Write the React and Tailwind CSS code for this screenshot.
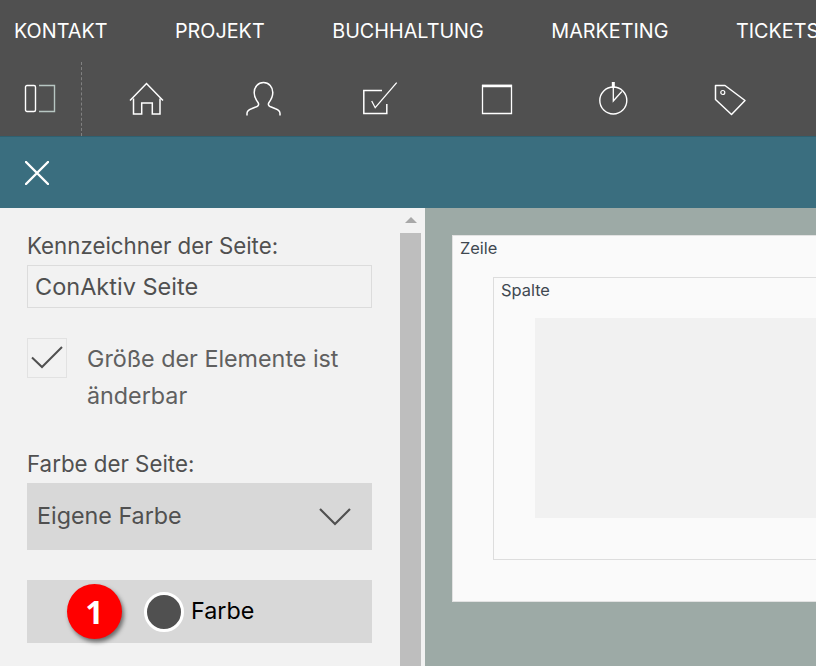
const NAV_ITEMS = ['KONTAKT', 'PROJEKT', 'BUCHHALTUNG', 'MARKETING', 'TICKETS']

const iconProps = {
  fill: 'none',
  stroke: 'currentColor',
  strokeWidth: 1.3,
  className: 'w-[36px] h-[36px] text-white',
  viewBox: '0 0 36 36',
}

function HomeIcon() {
  return (
    <svg {...iconProps}>
      <path d="M2 19.500 18.500 2.500 35 19.500" strokeWidth="1.500" />
      <path d="M5.500 17.500V33H13.700V22H24.300V33H32V17.500" strokeWidth="1.500" />
    </svg>
  )
}

function UserIcon() {
  return (
    <svg {...iconProps}>
      <path d="M2 34.500v-2c0-2.500 2-4 4.500-4.800l5.500-2.200c1.800-.8 2-2.500 1-4-2.200-3-3.800-6-3.800-10C9.200 6 13 1.500 18.500 1.500S27.800 6 27.800 11.500c0 4-1.600 7-3.800 10-1 1.500-.8 3.200 1 4l5.500 2.200c2.500.8 4.500 2.300 4.500 4.800v2" strokeWidth="1.500" />
    </svg>
  )
}

function TaskIcon() {
  return (
    <svg {...iconProps}>
      <path d="M20 9.500H1.800v23h23V23" strokeWidth="1.500" />
      <path d="M9.700 20l3.500 6.700L34.700 1.700" strokeWidth="1.300" />
    </svg>
  )
}

function WindowIcon() {
  return (
    <svg {...iconProps}>
      <path d="M3.500 4.500h29v28h-29z" strokeWidth="1.300" />
      <path d="M3 5h30" strokeWidth="2.500" />
    </svg>
  )
}

function TimerIcon() {
  return (
    <svg {...iconProps}>
      <circle cx="17.300" cy="19.500" r="13.500" strokeWidth="1.400" />
      <path d="M17.300 1v6" strokeWidth="3" />
      <path d="M17.300 6v14l8.500-9.500" strokeWidth="1.300" />
    </svg>
  )
}

function TagIcon() {
  return (
    <svg {...iconProps}>
      <path d="M2.500 4.500H12L32 19.500 18.500 33.500 2.500 18.500z" strokeWidth="1.500" strokeLinejoin="round" />
      <circle cx="9.800" cy="11.500" r="2" strokeWidth="1.200" />
    </svg>
  )
}

const TOOLBAR_ICONS = [HomeIcon, UserIcon, TaskIcon, WindowIcon, TimerIcon, TagIcon]

export default function App() {
  return (
    <div className="w-[816px] h-[666px] overflow-hidden flex flex-col font-['Inter',sans-serif]">
      {/* Top bar */}
      <header className="h-[136px] shrink-0 bg-[#505050] overflow-hidden">
        <nav className="h-[62px] flex items-center gap-[67.500px] pl-[14px] pt-[1px] whitespace-nowrap text-white text-[19.800px]">
          {NAV_ITEMS.map(item => <span key={item}>{item}</span>)}
        </nav>
        <div className="h-[74px] flex">
          <div className="w-[82px] shrink-0 border-r border-dashed border-[#808080] flex items-center justify-center pb-[1px] pr-[1px]">
            <svg viewBox="0 0 32 30" className="w-[32px] h-[30px]" fill="none">
              <rect x="1.500" y="1.500" width="10" height="26" rx="1.500" stroke="#fff" strokeWidth="1.400" />
              <path d="M15 1.500h15.500v26H15" stroke="#b7c6c2" strokeWidth="1.400" />
            </svg>
          </div>
          <div className="flex items-center pl-[46px] gap-[81px]">
            {TOOLBAR_ICONS.map((Icon, i) => <Icon key={i} />)}
          </div>
        </div>
      </header>

      {/* Teal action bar */}
      <div className="h-[72px] shrink-0 bg-[#3a6e7f] border-t border-[#2f6070] flex items-center pl-[25px]">
        <svg viewBox="0 0 24 24" className="w-[24px] h-[24px]" fill="none" stroke="#fff" strokeWidth="2.400" strokeLinecap="round">
          <path d="M1 1l22 22M23 1L1 23" />
        </svg>
      </div>

      <div className="flex-1 flex min-h-0">
        {/* Settings panel */}
        <aside className="w-[425px] shrink-0 bg-[#f2f2f2] flex">
          <div className="w-[400px] shrink-0 pt-[25px] pl-[27px] pr-[28px] text-[#505050]">
            <label className="block text-[22.300px] leading-[26px]">Kennzeichner der Seite:</label>
            <div className="mt-[6px] h-[43px] border border-[#dcdcdc] flex items-center pl-[7px] pt-[1px] text-[23.500px]">
              ConAktiv Seite
            </div>

            <div className="mt-[30px] flex">
              <div className="w-[40px] h-[40px] shrink-0 border border-[#e2e2e2] flex items-center justify-center">
                <svg viewBox="0 0 32 24" className="w-[32px] h-[24px]" fill="none" stroke="#505050" strokeWidth="2">
                  <path d="M1 11.500 11 21 31 1" />
                </svg>
              </div>
              <p className="ml-[20px] pt-[2px] pb-[1px] text-[23.300px] leading-[37px] text-[#606060]">Größe der Elemente ist änderbar</p>
            </div>

            <label className="block mt-[36px] text-[22.300px] leading-[26px]">Farbe der Seite:</label>
            <div className="mt-[6px] h-[67px] bg-[#d8d8d8] flex items-center justify-between pl-[10px] pr-[21px] text-[23.300px]">
              <span>Eigene Farbe</span>
              <svg viewBox="0 0 32 18" className="w-[32px] h-[18px]" fill="none" stroke="#505050" strokeWidth="2.200">
                <path d="M1 1l15 15L31 1" />
              </svg>
            </div>

            <div className="mt-[30px] h-[63px] bg-[#d8d8d8] flex items-center pl-[40px] relative">
              <div className="w-[55px] h-[55px] rounded-full bg-[#ff0000] text-white font-bold font-['Open_Sans',sans-serif] text-[32px] flex items-center justify-center shadow-[2px_3px_4px_rgba(0,0,0,0.5)]">1</div>
              <div className="ml-[22px] w-[40px] h-[40px] rounded-full bg-[#505050] border-[3px] border-white" />
              <span className="ml-[7px] text-[23.300px] text-black pb-[1px]">Farbe</span>
            </div>
          </div>

          {/* Scrollbar */}
          <div className="w-[21px] shrink-0 flex flex-col items-center">
            <div className="h-[25px] w-full flex items-center justify-center pb-[2px]">
              <div className="w-0 h-0 border-x-[6px] border-x-transparent border-b-[6px] border-b-[#a8a8a8]" />
            </div>
            <div className="flex-1 w-full bg-[#bebebe]" />
          </div>
        </aside>

        {/* Canvas */}
        <main className="flex-1 min-w-0 bg-[#9daaa6] pt-[27px] pl-[27px] overflow-hidden">
          <div className="w-[400px] h-[367px] bg-[#fafafa] border-t border-l border-b border-[#e2e2e2] text-[16.400px] text-[#404850]">
            <div className="pl-[7px] leading-[24px] h-[41px]">Zeile</div>
            <div className="ml-[40px] w-[360px] h-[283px] border-t border-l border-b border-[#dddddd]">
              <div className="pl-[7px] leading-[24px] h-[40px]">Spalte</div>
              <div className="ml-[41px] h-[200px] bg-[#f1f1f1]" />
            </div>
          </div>
        </main>
      </div>
    </div>
  )
}
